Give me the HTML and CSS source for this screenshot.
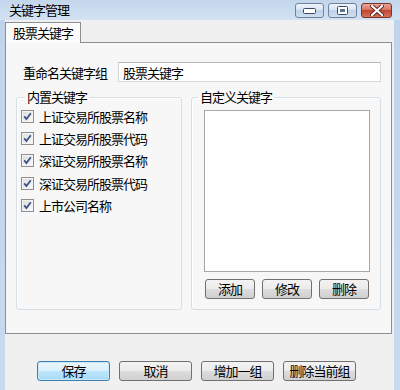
FILE: index.html
```html
<!DOCTYPE html>
<html>
<head>
  <meta charset="utf-8">
  <title>关键字管理</title>
  <link rel="stylesheet" href="styles.css">
</head>
<body>
  <div class="titlebar">
    <span class="title">关键字管理</span>
    <div class="caption-buttons">
      <span class="cap">
        <svg width="13" height="6" viewBox="0 0 13 6"><rect x="0.5" y="0.5" width="12" height="5" rx="1" fill="#fff" stroke="#3b4a63"/></svg>
      </span>
      <span class="cap">
        <svg width="11" height="9" viewBox="0 0 11 9"><rect x="0.5" y="0.5" width="10" height="8" rx="1" fill="#fff" stroke="#3b4a63"/><rect x="3" y="3" width="5" height="3" fill="#5d7195"/></svg>
      </span>
      <span class="cap close">
        <svg width="14" height="11" viewBox="0 0 14 11"><path d="M2 1 L12 10 M12 1 L2 10" stroke="#5a2219" stroke-width="4" stroke-linecap="round"/><path d="M2 1 L12 10 M12 1 L2 10" stroke="#fff" stroke-width="2.2" stroke-linecap="round"/></svg>
      </span>
    </div>
  </div>

  <div class="client">
    <div class="tab">股票关键字</div>
    <div class="panel">
      <div class="rename-row">
        <label for="group-name">重命名关键字组</label>
        <input type="text" id="group-name" value="股票关键字">
      </div>

      <div class="groups">
        <fieldset class="group builtin">
          <legend>内置关键字</legend>
          <div class="check-row"><span class="check"></span>上证交易所股票名称</div>
          <div class="check-row"><span class="check"></span>上证交易所股票代码</div>
          <div class="check-row"><span class="check"></span>深证交易所股票名称</div>
          <div class="check-row"><span class="check"></span>深证交易所股票代码</div>
          <div class="check-row"><span class="check"></span>上市公司名称</div>
        </fieldset>

        <fieldset class="group custom">
          <legend>自定义关键字</legend>
          <div class="listbox"></div>
          <div class="list-buttons">
            <button class="btn small">添加</button>
            <button class="btn small">修改</button>
            <button class="btn small">删除</button>
          </div>
        </fieldset>
      </div>
    </div>

    <div class="bottom-buttons">
      <button class="btn wide default">保存</button>
      <button class="btn wide">取消</button>
      <button class="btn wide">增加一组</button>
      <button class="btn wide">删除当前组</button>
    </div>
  </div>
</body>
</html>
```

FILE: styles.css
```css
body {
  margin: 0;
  width: 400px;
  height: 390px;
  overflow: hidden;
  background: linear-gradient(#bfd4eb, #c8daee);
  font-family: "Noto Sans CJK SC", sans-serif;
  font-size: 13px;
  letter-spacing: -1px;
  color: #000;
}

.titlebar {
  height: 20px;
  display: flex;
  align-items: center;
  padding: 0 8px 0 9px;
  background: linear-gradient(#c2d6ec, #d3e2f2);
}

.title {
  flex: 1;
  line-height: 20px;
}

.caption-buttons {
  display: flex;
  gap: 4px;
  margin-top: 1px;
}

.cap {
  width: 29px;
  height: 15px;
  box-sizing: border-box;
  border: 1px solid #6e82a0;
  border-radius: 3px;
  background: linear-gradient(#edf3fa, #d6e3f2 50%, #bfd2ea 50%, #cfdff1);
  display: flex;
  align-items: center;
  justify-content: center;
}

.cap.close {
  width: 31px;
  border-color: #7b3429;
  background: linear-gradient(#eaa697, #d36f5b 50%, #c34430 50%, #d1735b);
}

.client {
  margin: 0 6px 0 5px;
  height: 370px;
  box-sizing: border-box;
  padding-top: 2px;
  background: #f0f0f0;
}

.tab {
  position: relative;
  z-index: 1;
  width: 76px;
  height: 21px;
  box-sizing: border-box;
  margin-bottom: -1px;
  padding-left: 7px;
  line-height: 20px;
  border: 1px solid #8c8e94;
  border-bottom: none;
  background: #fbfbfb;
}

.panel {
  width: 387px;
  height: 292px;
  box-sizing: border-box;
  padding: 19px 0 0 10px;
  border: 1px solid #8c8e94;
  background: #f7f7f7;
}

.rename-row {
  display: flex;
  align-items: center;
  margin-left: 7px;
  height: 20px;
}

.rename-row label {
  width: 95px;
}

.rename-row input {
  width: 263px;
  height: 20px;
  box-sizing: border-box;
  margin: 0;
  padding: 0 4px;
  border: 1px solid #d3d6dc;
  border-top-color: #b5b8c0;
  background: #fff;
  font-family: inherit;
  font-size: inherit;
  letter-spacing: inherit;
}

.groups {
  display: flex;
  gap: 9px;
  margin-top: 8px;
}

.group {
  margin: 0;
  padding: 1px 4px 0;
  height: 220px;
  box-sizing: border-box;
  border: 1px solid #d5dfe5;
  border-radius: 3px;
  box-shadow: inset 1px 1px #fff;
  min-inline-size: 0;
}

.group legend {
  margin-left: 4px;
  padding: 0 2px;
  line-height: 14px;
}

.builtin {
  width: 166px;
}

.custom {
  width: 190px;
  padding-top: 6px;
}

.custom legend {
  margin-left: 2px;
}

.check-row {
  display: flex;
  align-items: center;
  height: 22.4px;
}

.check {
  width: 13px;
  height: 13px;
  box-sizing: border-box;
  margin-right: 5px;
  border: 1px solid #8f8f8f;
  background:
    url("data:image/svg+xml,%3Csvg xmlns='http://www.w3.org/2000/svg' width='11' height='11' viewBox='0 0 11 11'%3E%3Cpath d='M2.2 5.4 L4.4 8 L8.8 2.2' fill='none' stroke='%233d5286' stroke-width='1.8'/%3E%3C/svg%3E") center no-repeat,
    linear-gradient(135deg, #dcdcdc, #fbfbfb);
  box-shadow: inset 0 0 0 1px #f4f4f4;
}

.listbox {
  width: 166px;
  height: 162px;
  box-sizing: border-box;
  margin-left: 8px;
  border: 1px solid #a3a6ad;
  background: #fff;
}

.list-buttons {
  display: flex;
  gap: 7px;
  margin: 7px 0 0 9px;
}

.btn {
  height: 20px;
  box-sizing: border-box;
  padding: 0;
  border: 1px solid #707070;
  border-radius: 3px;
  background: linear-gradient(#f3f3f3, #ebebeb 50%, #dddddd 50%, #d0d0d0);
  font-family: inherit;
  font-size: inherit;
  letter-spacing: inherit;
  line-height: 18px;
  color: #000;
}

.btn.small {
  width: 50px;
}

.btn.wide {
  width: 73px;
}

.btn.default {
  border-color: #3c7fb1;
  background: linear-gradient(#eaf6fd, #d9f0fc 50%, #bee6fd 50%, #a7d9f5);
  box-shadow: inset 0 0 0 1px #cbe8f8;
}

.bottom-buttons {
  display: flex;
  gap: 9px;
  margin-top: 27px;
  padding-left: 32px;
}
```
